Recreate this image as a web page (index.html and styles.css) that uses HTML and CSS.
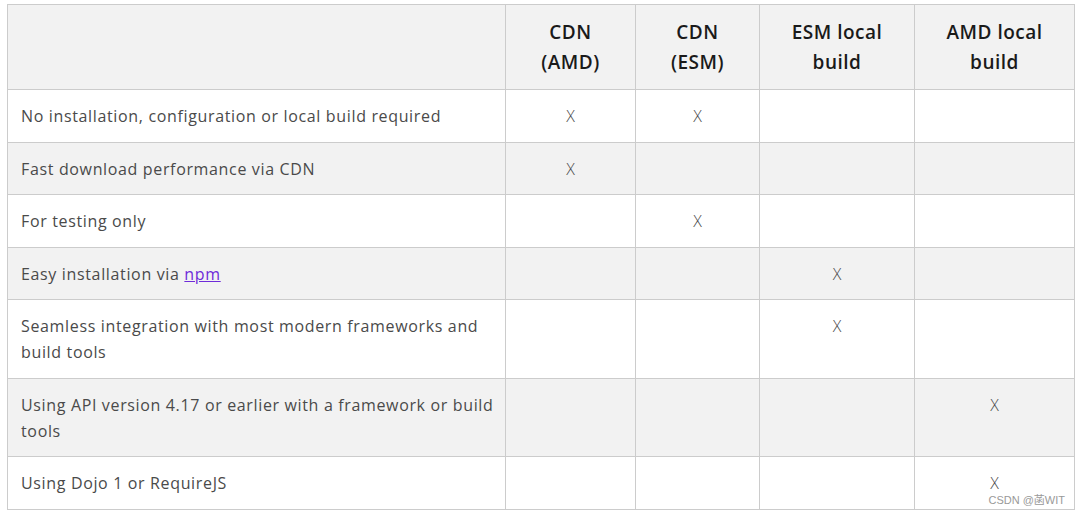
FILE: index.html
```html
<!DOCTYPE html>
<html lang="en">
<head>
<meta charset="utf-8">
<title>Comparison</title>
<link rel="stylesheet" href="styles.css">
</head>
<body>
<table class="cmp">
  <colgroup>
    <col class="c-desc">
    <col class="c-a">
    <col class="c-b">
    <col class="c-c">
    <col class="c-d">
  </colgroup>
  <thead>
    <tr>
      <th></th>
      <th>CDN<br>(AMD)</th>
      <th>CDN<br>(ESM)</th>
      <th>ESM local<br>build</th>
      <th>AMD local<br>build</th>
    </tr>
  </thead>
  <tbody>
    <tr><td>No installation, configuration or local build required</td><td class="x">X</td><td class="x">X</td><td class="x"></td><td class="x"></td></tr>
    <tr><td>Fast download performance via CDN</td><td class="x">X</td><td class="x"></td><td class="x"></td><td class="x"></td></tr>
    <tr><td>For testing only</td><td class="x"></td><td class="x">X</td><td class="x"></td><td class="x"></td></tr>
    <tr><td>Easy installation via <a href="#" class="link">npm</a></td><td class="x"></td><td class="x"></td><td class="x">X</td><td class="x"></td></tr>
    <tr><td>Seamless integration with most modern frameworks and build tools</td><td class="x"></td><td class="x"></td><td class="x">X</td><td class="x"></td></tr>
    <tr><td>Using API version 4.17 or earlier with a framework or build tools</td><td class="x"></td><td class="x"></td><td class="x"></td><td class="x">X</td></tr>
    <tr><td>Using Dojo 1 or RequireJS</td><td class="x"></td><td class="x"></td><td class="x"></td><td class="x last"><span class="xm">X</span><span class="mark">CSDN @菡WIT</span></td></tr>
  </tbody>
</table>
</body>
</html>
```

FILE: styles.css
```css
html, body {
  margin: 0;
  background: #ffffff;
}
body {
  padding: 4px 5px 0 7px;
  font-family: "Open Sans", "Noto Sans", sans-serif;
}
.cmp {
  width: 1067px;
  border-collapse: collapse;
  table-layout: fixed;
  font-size: 16px;
  color: #4a4a4a;
}
.c-desc { width: 498px; }
.c-a { width: 130px; }
.c-b { width: 124px; }
.c-c { width: 155px; }
.c-d { width: 160px; }
.cmp th, .cmp td {
  border: 1px solid #cccccc;
}
.cmp th {
  background: #f2f2f2;
  color: #1a1a1a;
  font-size: 19px;
  font-weight: 600;
  letter-spacing: 0.5px;
  line-height: 30px;
  padding: 12px 6px;
  text-align: center;
  vertical-align: middle;
}
.cmp td {
  line-height: 26px;
  letter-spacing: 0.65px;
  font-weight: 370;
  padding: 13px 8px 12.5px 13px;
  vertical-align: top;
}
.cmp tbody tr:nth-child(even) td {
  background: #f2f2f2;
}
.cmp td.x {
  text-align: center;
  padding-right: 13px;
  color: #4a4a4a;
  font-weight: 300;
  letter-spacing: 0;
}
.cmp td.last {
  position: relative;
}
.xm {
  display: inline-block;
  line-height: 18px;
  vertical-align: top;
  margin-top: 4px;
}
.link {
  color: #6e2bd9;
  text-decoration: underline;
}
.mark {
  position: absolute;
  right: 9px;
  bottom: 3px;
  font-family: "Liberation Sans", "Noto Sans CJK SC", sans-serif;
  font-size: 11px;
  line-height: 11px;
  color: #999999;
  font-weight: 400;
  letter-spacing: 0;
}
```
